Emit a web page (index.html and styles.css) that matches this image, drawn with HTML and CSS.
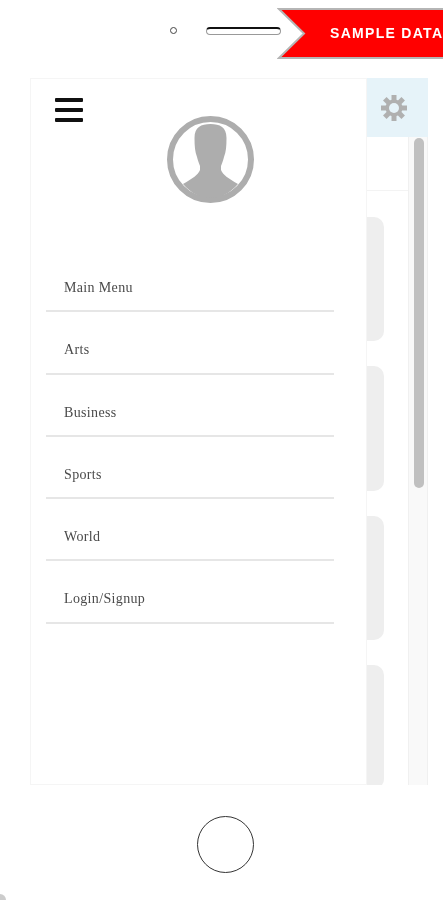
FILE: index.html
```html
<!DOCTYPE html>
<html lang="en">
<head>
    <meta charset="UTF-8">
    <meta name="viewport" content="width=device-width, initial-scale=1.0">
    <title>Phone Preview</title>
    <link rel="stylesheet" href="styles.css">
</head>
<body>
    <div class="phone">
        <div class="phone-top">
            <span class="camera"></span>
            <span class="speaker"></span>
        </div>

        <div class="ribbon">
            <svg class="ribbon-shape" width="166" height="52" viewBox="0 0 166 52">
                <polygon points="172,1 2,1 27,25.5 2,50 172,50" fill="#ff0000" stroke="#b5b5b5" stroke-width="2"/>
            </svg>
            <span class="ribbon-text">SAMPLE DATA</span>
        </div>

        <div class="screen">
            <div class="drawer">
                <div class="hamburger">
                    <span></span>
                    <span></span>
                    <span></span>
                </div>
                <div class="avatar">
                    <svg width="87" height="87" viewBox="0 0 87 87">
                        <circle cx="43.5" cy="43.5" r="40.5" fill="#fff" stroke="#adadad" stroke-width="6"/>
                        <path d="M43.5 8C34 8 27.5 11 27.5 22C27.5 30 28 36 30 41C31 45 32 47 33 50L33 54C31 59 26 62 16 68C24 77 33 82 43.5 82C54 82 63 77 71 68C61 62 56 59 54 54L54 50C55 47 56 45 57 41C59 36 59.5 30 59.5 22C59.5 11 53 8 43.5 8Z" fill="#adadad"/>
                    </svg>
                </div>
                <ul class="menu">
                    <li>Main Menu</li>
                    <li>Arts</li>
                    <li>Business</li>
                    <li>Sports</li>
                    <li>World</li>
                    <li>Login/Signup</li>
                </ul>
            </div>

            <div class="app">
                <div class="app-header">
                    <svg width="28" height="28" viewBox="0 0 28 28">
                        <g stroke="#b0b0b0" stroke-width="5">
                            <line x1="14" y1="1" x2="14" y2="27"/>
                            <line x1="1" y1="14" x2="27" y2="14"/>
                            <line x1="4.8" y1="4.8" x2="23.2" y2="23.2"/>
                            <line x1="23.2" y1="4.8" x2="4.8" y2="23.2"/>
                        </g>
                        <circle cx="14" cy="14" r="8.5" fill="#b0b0b0"/>
                        <circle cx="14" cy="14" r="5" fill="#e6f3f9"/>
                    </svg>
                </div>
                <div class="app-body">
                    <div class="feed">
                        <div class="feed-top"></div>
                        <div class="feed-card"></div>
                        <div class="feed-card"></div>
                        <div class="feed-card"></div>
                        <div class="feed-card"></div>
                    </div>
                    <div class="scrollbar">
                        <div class="scroll-thumb"></div>
                    </div>
                </div>
            </div>
        </div>

        <div class="phone-bottom">
            <span class="home-button"></span>
        </div>

        <span class="corner-mark"></span>
    </div>
</body>
</html>
```

FILE: styles.css
```css
body {
    margin: 0;
    background-color: #fff;
    font-family: "Liberation Serif", serif;
}

.phone {
    position: relative;
    height: 900px;
    overflow: hidden;
    display: flex;
    flex-direction: column;
    filter: blur(0.5px);
}

.phone-top {
    height: 78px;
    flex-shrink: 0;
    box-sizing: border-box;
    padding: 27px 0 0 170px;
    display: flex;
    align-items: flex-start;
    gap: 29px;
}

.camera {
    width: 7px;
    height: 7px;
    box-sizing: border-box;
    border: 1.5px solid #444;
    border-radius: 50%;
}

.speaker {
    width: 75px;
    height: 8px;
    box-sizing: border-box;
    border: 1px solid #999;
    border-top: 2px solid #111;
    border-radius: 4px;
}

/* ribbon lies over the top of the phone */
.ribbon {
    position: absolute;
    top: 8px;
    left: 277px;
    width: 166px;
    height: 52px;
    overflow: hidden;
}

.ribbon-shape {
    position: absolute;
    top: 0;
    left: 0;
}

.ribbon-text {
    position: absolute;
    top: 17px;
    left: 53px;
    color: #fff;
    font-family: "Liberation Sans", Arial, sans-serif;
    font-size: 14px;
    font-weight: bold;
    letter-spacing: 1.3px;
    white-space: nowrap;
}

.screen {
    height: 707px;
    width: 398px;
    margin-left: 30px;
    flex-shrink: 0;
    display: flex;
}

.drawer {
    width: 337px;
    box-sizing: border-box;
    flex-shrink: 0;
    border: 1px solid #f5f5f5;
    padding: 19px 0 0 15px;
}

.hamburger {
    width: 28px;
    margin-left: 9px;
    display: flex;
    flex-direction: column;
    gap: 6px;
}

.hamburger span {
    height: 4px;
    background-color: #111;
    border-radius: 1px;
}

.avatar {
    height: 87px;
    margin: -6px 0 0 121px;
}

.avatar svg {
    display: block;
}

.menu {
    list-style: none;
    margin: 47px 0 0;
    padding: 0;
    width: 288px;
}

.menu li {
    height: 62.3px;
    box-sizing: border-box;
    padding: 29px 0 0 18px;
    border-bottom: 2px solid #e6e6e6;
    color: #4a4a4a;
    font-size: 14px;
    letter-spacing: 0.35px;
    line-height: 18px;
}

.app {
    flex: 1;
    display: flex;
    flex-direction: column;
    min-width: 0;
}

.app-header {
    height: 59px;
    flex-shrink: 0;
    background-color: #e6f3f9;
    display: flex;
    align-items: center;
    justify-content: center;
    padding-right: 8px;
    box-sizing: border-box;
}

.app-body {
    flex: 1;
    display: flex;
    min-height: 0;
}

.feed {
    flex: 1;
    overflow: hidden;
    display: flex;
    flex-direction: column;
    gap: 25px;
}

.feed-top {
    height: 53px;
    flex-shrink: 0;
    border-bottom: 1px solid #f3f3f3;
    margin-bottom: 1px;
}

.feed-card {
    width: 17px;
    height: 124.3px;
    flex-shrink: 0;
    background-color: #eeeeee;
    border-radius: 0 10px 10px 0;
}

.scrollbar {
    width: 20px;
    box-sizing: border-box;
    background-color: #f9f9f9;
    border-left: 1px solid #f0f0f0;
    border-right: 1px solid #f0f0f0;
    padding: 1px 0 0 5px;
}

.scroll-thumb {
    width: 10px;
    height: 350px;
    background-color: #c0c0c0;
    border-radius: 5px;
}

.phone-bottom {
    flex: 1;
    display: flex;
    justify-content: center;
    padding: 31px 0 0 7px;
}

.home-button {
    width: 57px;
    height: 57px;
    box-sizing: border-box;
    border: 1px solid #333;
    border-radius: 50%;
}

.corner-mark {
    position: absolute;
    left: -6px;
    bottom: -6px;
    width: 12px;
    height: 12px;
    border-radius: 50%;
    background-color: #ccc;
}
```
